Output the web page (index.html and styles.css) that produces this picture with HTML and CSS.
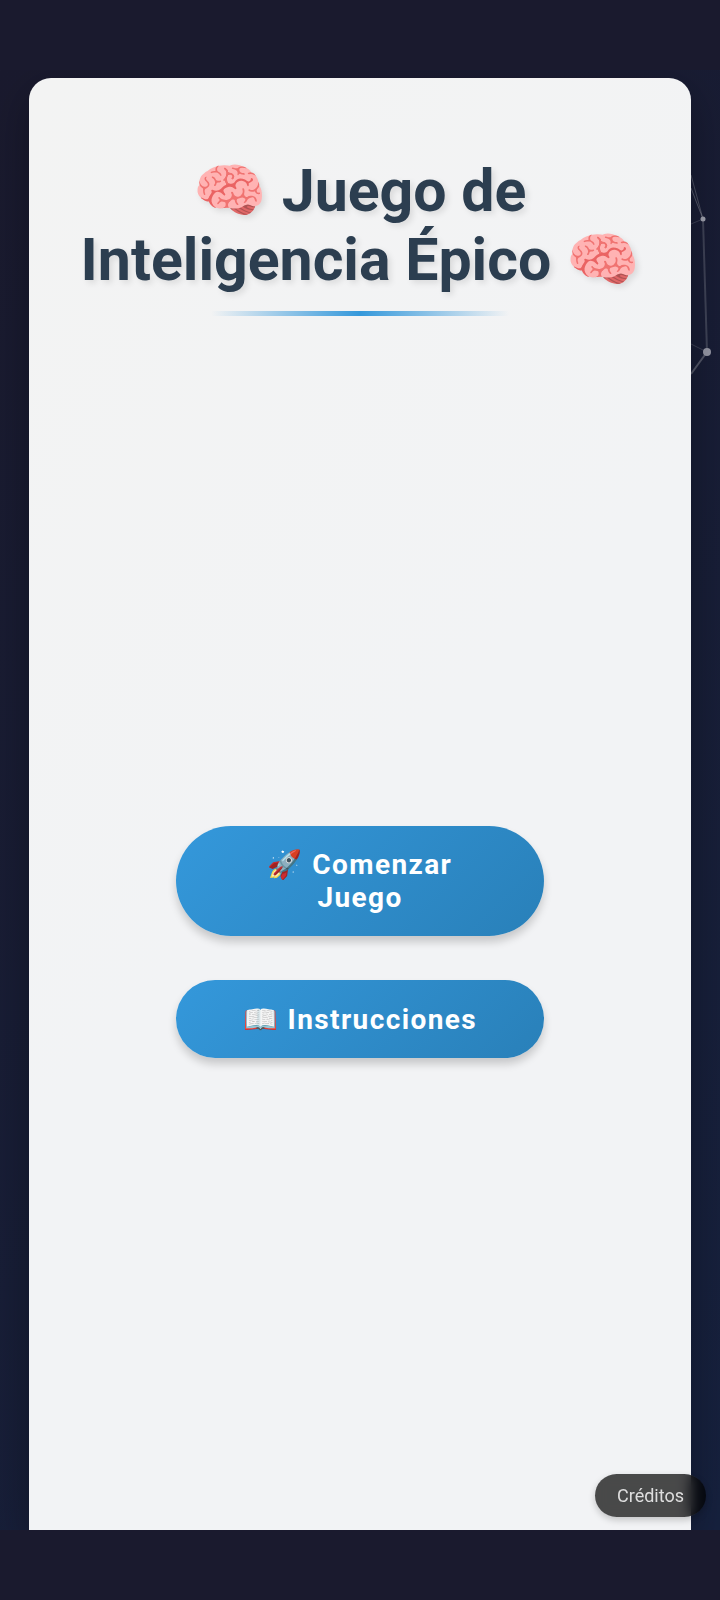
FILE: index.html
```
<!DOCTYPE html>
<html lang="es">
<head>
<meta charset="utf-8">
<meta name="viewport" content="width=device-width, initial-scale=1">
<title>Juego de Inteligencia Épico</title>
<link rel="stylesheet" href="styles.css">
</head>
<body>
<div class="stage">
  <svg class="particles" viewBox="0 0 72 400" aria-hidden="true">
    <g stroke="#fff" fill="none">
      <path d="M43 115 55 159" stroke-opacity=".22"/>
      <path d="M43 128 55 159" stroke-opacity=".25"/>
      <path d="M43 164 55 159" stroke-opacity=".15"/>
      <path d="M55 159 59 292" stroke-width="2" stroke-opacity=".17"/>
      <path d="M43 284 59 292" stroke-opacity=".15"/>
      <path d="M43 314 59 292" stroke-width="2" stroke-opacity=".25"/>
    </g>
    <circle cx="55" cy="159" r="2.5" fill="#a0a2ae"/>
    <circle cx="59" cy="292" r="4" fill="#9597a5"/>
  </svg>
  <main class="card">
    <h1 class="title">🧠 Juego de Inteligencia Épico 🧠</h1>
    <nav class="menu">
      <button class="btn" type="button">🚀 Comenzar Juego</button>
      <button class="btn" type="button">📖 Instrucciones</button>
    </nav>
  </main>
  <button class="credits" type="button">Créditos</button>
</div>
</body>
</html>
```
FILE: styles.css
```
* { box-sizing: border-box; }
body {
  margin: 0;
  min-height: 100vh;
  padding: 70px 0;
  display: flex;
  background: #1a1a2e;
  font-family: Roboto, "Noto Color Emoji", sans-serif;
}
.stage {
  position: relative;
  flex: 1;
  display: flex;
  padding: 8px 29px 0;
  overflow: hidden;
  background: linear-gradient(135deg, #1a1a2e, #16213e);
}
.particles {
  position: absolute;
  top: -10px;
  right: 0;
  width: 72px;
}
.card {
  position: relative;
  flex: 1;
  display: flex;
  flex-direction: column;
  align-items: center;
  padding: 78px 44px 0;
  border-radius: 22px 22px 0 0;
  background: linear-gradient(135deg, #f3f3f3, #f2f3f5 50%, #f2f3f5);
  box-shadow: 0 12px 44px rgba(0, 0, 0, .3);
}
.title {
  margin: 0;
  padding-bottom: 23px;
  font-size: 59px;
  line-height: 69px;
  color: #2c3e50;
  text-align: center;
  text-shadow: 3px 3px 6px rgba(0, 0, 0, .1);
}
.title::after {
  content: "";
  display: block;
  width: 52%;
  height: 5px;
  margin: 17px auto 0;
  background: linear-gradient(90deg, transparent, #3498db, transparent);
}
.menu {
  display: flex;
  flex-direction: column;
  gap: 44px;
  width: 368px;
  max-width: 100%;
  margin-top: 487px;
}
.btn {
  min-height: 78px;
  padding: 22px 58px;
  border: 0;
  border-radius: 55px;
  background: linear-gradient(135deg, #3498db, #2980b9);
  box-shadow: 0 6px 9px rgba(0, 0, 0, .18);
  color: #fff;
  font: 700 28px/33px Roboto, "Noto Color Emoji", sans-serif;
  letter-spacing: .05em;
}
.credits {
  position: absolute;
  right: 14px;
  bottom: 13px;
  padding: 11px 22px;
  border: 0;
  border-radius: 22px;
  background: rgba(0, 0, 0, .7);
  backdrop-filter: blur(7px);
  box-shadow: 0 3px 7px rgba(0, 0, 0, .2);
  color: #dedede;
  font: 18px/21px Roboto, sans-serif;
}
```
